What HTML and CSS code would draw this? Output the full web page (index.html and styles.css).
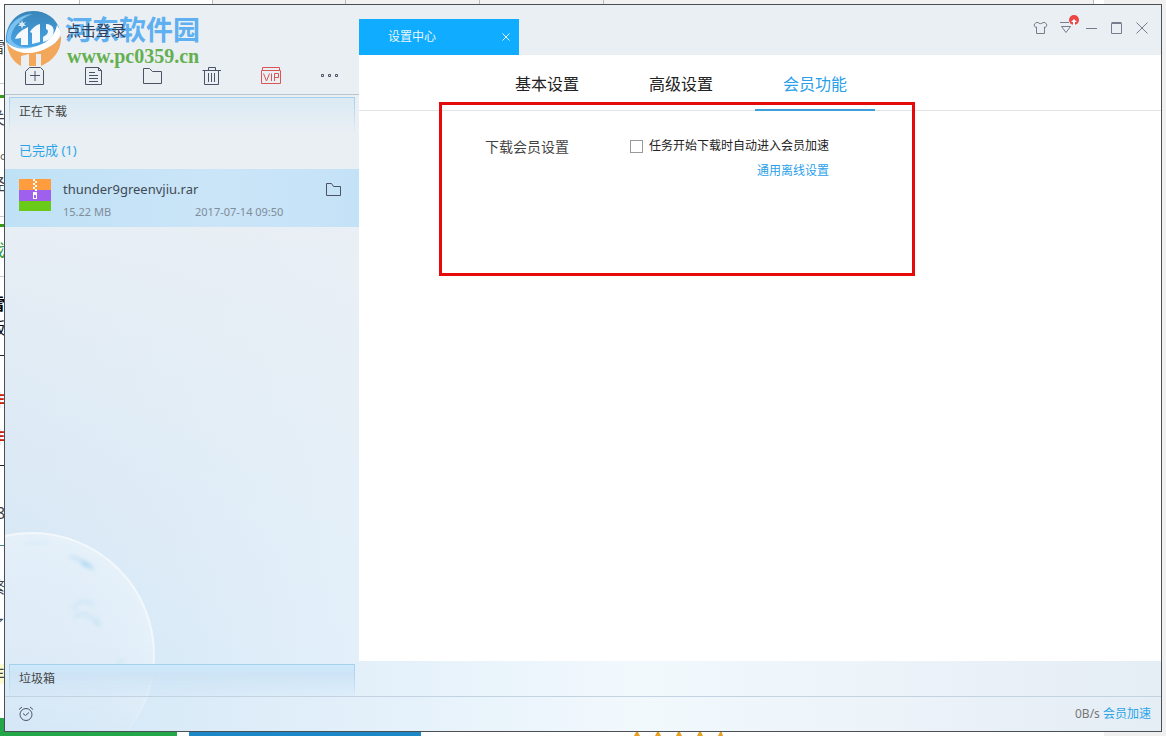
FILE: index.html
```
<!DOCTYPE html>
<html lang="zh-CN">
<head>
<meta charset="utf-8">
<title>设置中心</title>
<link rel="stylesheet" href="styles.css">
</head>
<body>
<div class="backdrop" aria-hidden="true">
  <span class="cell c1"></span><span class="cell c2"></span><span class="cell c3"></span><span class="cell c4"></span><span class="cell c5"></span><span class="cell c6"></span>
  <span class="frag f1">雷</span>
  <span class="frag f2">关</span>
  <span class="frag f3">。</span>
  <span class="frag f4">经</span>
  <span class="frag f5">戏</span>
  <span class="frag f6">雷</span>
  <span class="frag f7">版</span>
  <span class="frag f8">非</span>
  <span class="frag f9">非</span>
  <span class="frag f10">8</span>
  <span class="frag f11">繁</span>
  <span class="frag f12">了</span>
  <span class="frag f13">丰</span>
  <span class="rule g1"></span><span class="rule g2"></span><span class="rule k1"></span><span class="rule k2"></span><span class="rule k3"></span>
  <span class="rule l1"></span><span class="rule l2"></span><span class="rule l3"></span>
  <span class="bar green"></span><span class="bar blue"></span>
  <svg class="stars" width="100" height="6" viewBox="0 0 100 6" fill="#e8a020"><path d="M4 6 7 0l3 6zM25 6l3-6 3 6zM46 6l3-6 3 6zM67 6l3-6 3 6zM88 6l3-6 2 6z"/></svg>
</div>

<div class="window">
  <svg class="moon" width="160" height="200" viewBox="0 0 160 200" aria-hidden="true">
    <defs>
      <radialGradient id="moonFill" cx="27" cy="124" r="122" gradientUnits="userSpaceOnUse">
        <stop offset="0" stop-color="#e3edf8" stop-opacity=".7"/>
        <stop offset=".7" stop-color="#e5eff8" stop-opacity=".7"/>
        <stop offset="1" stop-color="#eaf3fa" stop-opacity=".7"/>
      </radialGradient>
      <linearGradient id="moonFade" x1="0" y1="0" x2="0" y2="1">
        <stop offset="0" stop-color="#fff"/><stop offset=".55" stop-color="#fff"/><stop offset="1" stop-color="#333"/>
      </linearGradient>
      <mask id="moonMask"><rect width="160" height="200" fill="url(#moonFade)"/></mask>
      <filter id="soft"><feGaussianBlur stdDeviation="2"/></filter>
    </defs>
    <g mask="url(#moonMask)">
      <circle cx="27" cy="124" r="122" fill="url(#moonFill)" stroke="#f2f8fc" stroke-width="2"/>
      <g filter="url(#soft)" fill="none" stroke="#c3e1f4" stroke-linecap="round">
        <path d="M66 26l7 2 9 5 6 5" stroke-width="3"/>
        <path d="M78 32l6 3" stroke-width="4" stroke="#a9d6f1"/>
        <path d="M68 78c5-9 14-10 20-4M70 86c6-6 14-3 18 3l4 4M92 87l2 8" stroke-width="2"/>
        <path d="M18 14c8-3 18-3 25-2" stroke-width="1"/>
        <path d="M112 133l6-4" stroke-width="2"/>
      </g>
    </g>
  </svg>

  <aside class="sidebar">
    <div class="account">
      <div class="watermark" aria-hidden="true">
        <svg class="wm-logo" width="58" height="60" viewBox="0 0 58 60">
          <defs><linearGradient id="wmBlue" x1="0" y1="0" x2="0" y2="1"><stop offset="0" stop-color="#3985b9"/><stop offset="1" stop-color="#4aa8ea"/></linearGradient></defs>
          <path d="M2 35C11 46 25 47 37 42 46 38 52 33 56 28 57 42 48 53 36 58V46H31V58H24V46L16 48V58C8 54 3 46 2 35z" fill="#f3a75a"/>
          <path d="M1 34C0 16 12 3 28 3c13 0 24 7 27 20 1 12-11 17-22 19C17 46 6 42 1 34z" fill="url(#wmBlue)"/>
          <path d="M2 32C1 18 12 7 28 6 16 10 6 20 6 31c4 8 14 10 25 7v3C17 44 6 41 2 32z" fill="#7cc2f0"/>
          <path d="M1 33C8 42 20 42 32 38 44 34 50 27 52 17l3 5c2 11-9 17-20 21C20 47 7 45 1 33z" fill="#fff"/>
          <path d="M10 31C12 25 17 22 23 19V37H16V30zM27 36V25l-2-1C27 20 31 17 35 16V34zM41 16c7 0 9 5 7 11-2 4-6 6-10 7V29c6-3 6-7 3-8z" fill="#f4f9fd"/>
          <path d="m17 12 1 3 3-1-2 2 2 2-3 0-1 3-1-3-3 0 2-2-2-2 3 1z" fill="#d8eaf8"/>
        </svg>
        <span class="wm-text"><span class="wm-name">河东软件园</span><span class="wm-url">www.pc0359.cn</span></span>
      </div>
      <a class="login" href="#">点击登录</a>
    </div>
    <div class="toolbar">
      <button type="button" aria-label="新建任务"><svg width="20" height="20" viewBox="0 0 20 20"><path d="M4.500 1.500H15.500L18.500 4.500V18.500H.5V5.500zM10 5v10M5 9.500h10"/></svg></button>
      <button type="button" aria-label="任务列表"><svg width="20" height="20" viewBox="0 0 20 20"><path d="M1.500 1.500H14.500L17.500 4.500V18.500H1.500zM14.500 1.500V4.500H17.500M5 6.500h6M5 9.500h9M5 12.500h9M5 15.500h9"/></svg></button>
      <button type="button" aria-label="文件夹"><svg width="20" height="20" viewBox="0 0 20 20"><path d="M.5 2.500H6.500L9.500 5.500H18.500V17.500H.5z"/></svg></button>
      <button type="button" aria-label="删除"><svg width="20" height="20" viewBox="0 0 20 20"><path d="M.5 4.500H19M6.500 4V1.500H13.500V4M2.500 5V18.500H16.500V5M6.500 7v9M9.500 7v9M12.500 7v9"/></svg></button>
      <button type="button" class="vip" aria-label="VIP"><svg width="20" height="20" viewBox="0 0 20 20"><path d="M.5 4.500H19.500V17.500H.5zM1.500 4V1.500H18.500V4"/><path d="M2.500 7.500 5.500 15 8.500 7.500M10.500 7.500V15M13.500 15V7.500H17.500V11.500H13.500"/></svg></button>
      <button type="button" aria-label="更多"><svg width="20" height="20" viewBox="0 0 20 20"><path d="M1.500 8.500h2v2h-2zM8.500 8.500h2v2h-2zM15.500 8.500h2v2h-2z"/></svg></button>
    </div>
    <a class="group boxed" href="#">正在下载</a>
    <a class="group done" href="#">已完成 (1)</a>
    <div class="task">
      <svg width="32" height="32" viewBox="0 0 32 32" aria-hidden="true"><path fill="#ff9c3d" d="M0 0h32v11H0z"/><path fill="#a060ee" d="M0 11h32v11H0z"/><path fill="#69cb18" d="M0 22h32v10H0z"/><path fill="#fff" d="M14 0h2v2h-2zM16 2h2v2h-2zM14 4h2v2h-2zM16 6h2v2h-2zM14 8h2v2h-2zM16 10h2v2h-2zM14 13h4v7h-4z"/><path fill="#a060ee" d="M15 16h2v3h-2z"/></svg>
      <div class="task-info">
        <span class="task-name">thunder9greenvjiu.rar</span>
        <span class="task-size">15.22 MB</span>
        <time class="task-time">2017-07-14 09:50</time>
      </div>
      <button type="button" class="open" aria-label="打开文件夹"><svg width="16" height="14" viewBox="0 0 16 14"><path d="M.5.5H5.500L7.500 3.500H14.500V12.500H.5z"/></svg></button>
    </div>
    <a class="group boxed trash" href="#">垃圾箱</a>
  </aside>

  <main class="main">
    <header class="titlebar">
      <div class="doc-tab"><span>设置中心</span><button type="button" aria-label="关闭标签"><svg width="8" height="8" viewBox="0 0 8 8"><path d="M.5.5l7 7M7.500.5l-7 7"/></svg></button></div>
      <div class="controls">
        <button type="button" class="wide" aria-label="皮肤"><svg width="15" height="14" viewBox="0 0 15 14"><path d="M5 1.500C6 3 9 3 10 1.500L12 1.500 14 4 12.500 6.500 11.500 6V12.500H3.500V6L2.500 6.500 1 4 3 1.500z"/></svg></button>
        <button type="button" class="wide" aria-label="菜单"><svg width="12" height="14" viewBox="0 0 12 14"><path d="M0 1.500H9M1.500 5.500H10.500L6 11.500z"/></svg><svg class="badge" width="10" height="10" viewBox="0 0 10 10"><circle cx="5" cy="5" r="5"/><path d="M5 4 8 7H6V10H4V7H2z"/></svg></button>
        <button type="button" aria-label="最小化"><svg width="12" height="12" viewBox="0 0 12 12"><path d="M0 6.500H11"/></svg></button>
        <button type="button" aria-label="最大化"><svg width="12" height="12" viewBox="0 0 12 12"><path d="M.5 1.500H10.500V11.500H.5zM.5.5H10.500"/></svg></button>
        <button type="button" aria-label="关闭"><svg width="12" height="12" viewBox="0 0 12 12"><path d="M.5.5l11 11M11.500.5l-11 11"/></svg></button>
      </div>
    </header>
    <section class="panel">
      <nav class="tabs">
        <a href="#">基本设置</a><a href="#">高级设置</a><a href="#" class="active">会员功能</a>
      </nav>
      <div class="settings">
        <h2>下载会员设置</h2>
        <div class="options">
          <label><input type="checkbox">任务开始下载时自动进入会员加速</label>
          <a href="#">通用离线设置</a>
        </div>
      </div>
      <div class="highlight" aria-hidden="true"></div>
    </section>
  </main>

  <footer class="status">
    <button type="button" aria-label="计划任务"><svg width="16" height="16" viewBox="0 0 16 16"><circle cx="8" cy="8.500" r="6"/><path d="M5 7.500 7.500 9.500 11 6.500M1 3.500 4 1M15 3.500 12 1"/></svg></button>
    <span class="speed">0B/s <a href="#">会员加速</a></span>
  </footer>
</div>
</body>
</html>
```

FILE: styles.css
```
* { box-sizing: border-box; }

body {
  margin: 0;
  min-height: 100vh;
  padding: 4px;
  display: flex;
  background: #fff;
  font-family: "Noto Sans", "Noto Sans CJK SC", sans-serif;
  font-size: 12px;
  line-height: 16px;
  color: #333;
}

a { color: inherit; text-decoration: none; }

button {
  display: grid;
  place-items: center;
  padding: 0;
  border: 0;
  background: none;
  color: inherit;
  font: inherit;
}

button svg { fill: none; stroke: currentColor; }

/* page behind the window */
.backdrop { position: fixed; inset: 0; overflow: hidden; background: linear-gradient(90deg, #fff 1104px, #f0f0f0 1104px); }
.cell { position: absolute; top: 0; height: 4px; border-right: 1px solid #bbb; background: #f1f1f1; }
.c1 { left: 0; width: 80px; background: #fff; }
.c2 { left: 80px; width: 133px; background: #fff; }
.c3 { left: 213px; width: 133px; }
.c4 { left: 346px; width: 134px; }
.c5 { left: 480px; width: 124px; }
.c6 { left: 604px; width: 490px; }
.frag { position: absolute; left: -11px; font-size: 16px; line-height: 20px; color: #444; }
.f1 { top: 37px; }
.f2 { top: 108px; }
.f3 { left: 0; top: 142px; }
.f4 { top: 174px; }
.f5 { top: 240px; color: #2a9a30; }
.f6 { top: 294px; color: #000; font-weight: bold; }
.f7 { top: 318px; color: #000; }
.f8 { top: 390px; color: #c20; font-weight: bold; }
.f9 { top: 427px; color: #c20; font-weight: bold; }
.f10 { left: -4px; top: 503px; }
.f11 { top: 577px; }
.f12 { top: 615px; }
.f13 { top: 664px; background: #fbfad0; }
.rule { position: absolute; left: 0; width: 4px; height: 1px; background: #ccc; }
.g1 { top: 95px; height: 3px; background: #3a9a18; }
.g2 { top: 224px; height: 3px; background: #3a9a18; }
.k1 { top: 355px; background: #222; }
.k2 { top: 465px; background: #222; }
.k3 { top: 545px; background: #4a8a8a; }
.l1 { top: 83px; }
.l2 { top: 216px; }
.l3 { top: 276px; }
.bar { position: absolute; bottom: 0; }
.green { left: 0; width: 177px; height: 18px; background: #22a848; }
.blue { left: 189px; width: 232px; height: 4px; background: #1c88c8; }
.stars { position: absolute; left: 630px; bottom: 0; }

.window {
  position: relative;
  flex: 1;
  display: grid;
  grid-template: 1fr auto / 354px 1fr;
  overflow: hidden;
  border: 1px solid #4c4f54;
  background:
    linear-gradient(180deg, #eaeff4 0, #eaeff4 22%, #eaeff400 90%),
    linear-gradient(90deg, #d2e6f6 0, #e3f0fa 31%, #f2f9fd 55%, #e5edf5 100%);
}

.moon { position: absolute; left: 0; bottom: 0; }
.sidebar, .main, .status { position: relative; }
.sidebar { display: flex; flex-direction: column; }

.account { position: relative; height: 53px; padding: 17px 0 0 61px; }
.login { position: relative; font-size: 15px; color: #35425a; }
.watermark { position: absolute; left: 0; top: 3px; display: flex; gap: 2px; }
.wm-text { display: flex; flex-direction: column; padding-top: 6px; }
.wm-name { font: bold 27px/29px "Noto Sans CJK SC", sans-serif; color: #5fb0f0; }
.wm-url { padding-left: 2px; font: bold 20px/26px "Liberation Serif", serif; color: #64b04e; }

.toolbar {
  position: relative;
  display: grid;
  grid-template-columns: repeat(6, 1fr);
  height: 37px;
  border-bottom: 1px solid #b8c4d0;
  color: #4d5366;
}
.vip { color: #dc5555; }

.group { height: 36px; padding: 0 10px; margin: 0 4px; line-height: 28px; color: #444; }
.boxed {
  margin-top: 2px;
  padding: 0 9px;
  border: solid #a9d1ea;
  border-width: 1px 1px 0;
  border-image: linear-gradient(#a5d0ea, #a5d0ea00) 1;
  background: linear-gradient(#daeaf4, #daeaf400);
}
.done { font-size: 13px; line-height: 34px; color: #2ca5e8; }
.trash {
  height: 32px;
  margin-top: auto;
  background: linear-gradient(#cdeafc, #cde4f6 25%, #cde4f633);
}

.task {
  display: flex;
  align-items: flex-start;
  gap: 12px;
  height: 58px;
  padding: 10px 17px 0 14px;
  background: linear-gradient(90deg, #bfe1f6, #cbe5f8 60%, #c4e2f7);
}
.task-info { flex: 1; display: grid; grid-template-columns: 132px 1fr; row-gap: 5px; font-size: 11px; color: #7f8c99; }
.task-name { grid-column: 1 / -1; font-size: 13px; line-height: 20px; color: #3f4a55; }
.open { margin-top: 4px; color: #4d5366; }

.main { display: flex; flex-direction: column; padding-bottom: 35px; }
.titlebar { display: flex; justify-content: space-between; align-items: flex-end; height: 50px; }
.doc-tab {
  display: flex;
  justify-content: space-between;
  align-items: center;
  width: 160px;
  height: 36px;
  padding: 0 9px 0 29px;
  background: #10acff;
  color: #e8f7ff;
}
.controls { display: flex; align-self: flex-start; padding: 10px 7px 0 0; color: #777d8c; }
.controls button { position: relative; width: 25px; height: 25px; }
.controls .wide { width: 26px; }
.badge { position: absolute; right: 0; top: 0; }
.controls .badge { stroke: none; fill: #ee4545; }
.badge path { fill: #fff; }

.panel { position: relative; flex: 1; background: #fff; }
.tabs { display: flex; gap: 14px; height: 56px; padding-left: 128px; border-bottom: 1px solid #e2e4e6; }
.tabs a { width: 120px; height: 56px; text-align: center; font-size: 16px; line-height: 58px; color: #222; }
.tabs .active { border-bottom: 2px solid #3d9ed8; color: #2a9fea; }

.settings { display: flex; align-items: flex-start; gap: 61px; padding: 26px 126px 0; }
.settings h2 { margin: 0; font-size: 14px; font-weight: normal; line-height: 20px; color: #444; }
.options { display: grid; justify-items: end; row-gap: 9px; padding-top: 1px; color: #222; }
.options label { display: flex; align-items: center; gap: 6px; }
.options input { appearance: none; width: 13px; height: 13px; margin: 0; border: 1px solid #999; background: #fff; }
.options a { color: #2a9fea; }
.highlight { position: absolute; left: 80px; top: 47px; width: 476px; height: 174px; border: 3px solid #e60b0b; pointer-events: none; }

.status {
  grid-column: 1 / -1;
  display: flex;
  justify-content: space-between;
  align-items: center;
  height: 35px;
  padding: 0 10px 0 13px;
  border-top: 1px solid #c3d3e2;
  color: #4d5366;
}
.speed { color: #777; }
.speed a { color: #2ca5e8; }
```
